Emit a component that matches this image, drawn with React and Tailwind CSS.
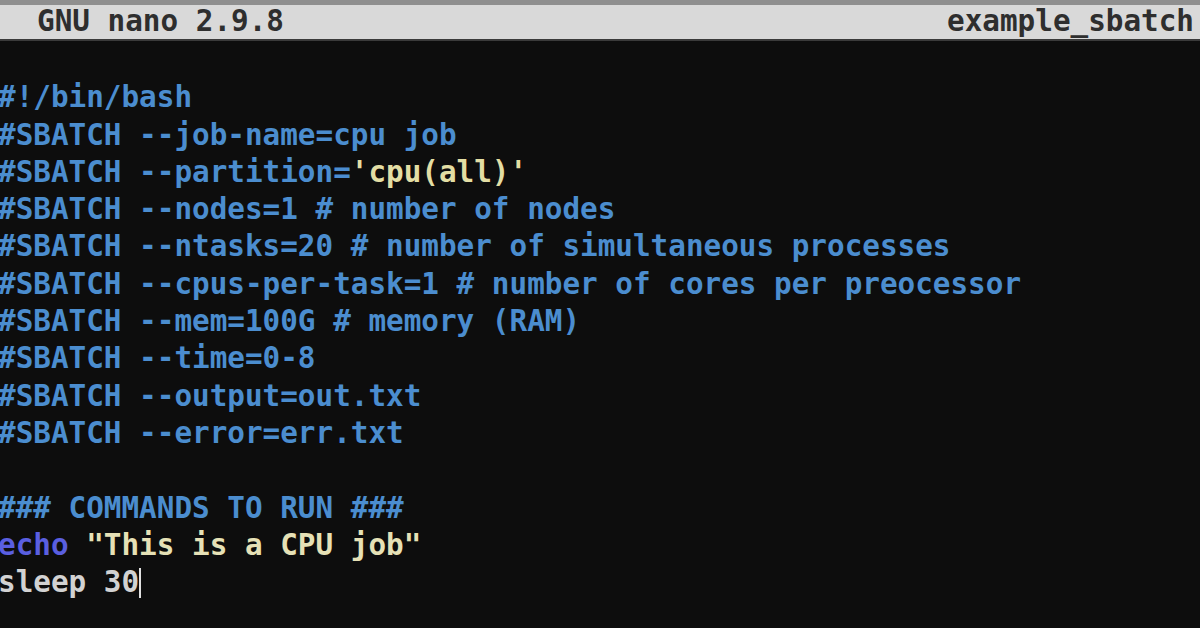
import React from 'react';

// ============================================
// NANO EDITOR SCREEN
// ============================================

const BLUE = 'text-[#4b8dcf]';

const lines = [
  [{ t: '', c: BLUE }],
  [{ t: '#!/bin/bash', c: BLUE }],
  [{ t: '#SBATCH --job-name=cpu job', c: BLUE }],
  [
    { t: "#SBATCH --partition=", c: BLUE },
    { t: "'cpu(all)'", c: 'text-[#e3dea4]' },
  ],
  [{ t: '#SBATCH --nodes=1 # number of nodes', c: BLUE }],
  [{ t: '#SBATCH --ntasks=20 # number of simultaneous processes', c: BLUE }],
  [{ t: '#SBATCH --cpus-per-task=1 # number of cores per preocessor', c: BLUE }],
  [{ t: '#SBATCH --mem=100G # memory (RAM)', c: BLUE }],
  [{ t: '#SBATCH --time=0-8', c: BLUE }],
  [{ t: '#SBATCH --output=out.txt', c: BLUE }],
  [{ t: '#SBATCH --error=err.txt', c: BLUE }],
  [{ t: '', c: BLUE }],
  [{ t: '### COMMANDS TO RUN ###', c: BLUE }],
  [
    { t: 'echo', c: 'text-[#5a5fe0]' },
    { t: ' "This is a CPU job"', c: 'text-[#e6e1b6]' },
  ],
  [{ t: 'sleep 30', c: 'text-[#d2d2d2]' }],
];

const App = () => {
  return (
    <div
      className="w-[1200px] h-[628px] overflow-hidden bg-[#0d0d0d] flex flex-col"
      style={{ fontFamily: '"DejaVu Sans Mono", "Liberation Mono", monospace' }}
    >
      {/* Title Bar */}
      <div className="h-[5px] bg-[#8f8f8f]" />
      <div className="h-[36px] bg-[#d9d9d9] flex items-center justify-between pl-[37px] pr-[6px] text-[29.3px] font-semibold text-[#2e2e2e] border-b-2 border-[#3a3a3a]">
        <span>GNU nano 2.9.8</span>
        <span>example_sbatch</span>
      </div>

      {/* Buffer */}
      <div className="flex flex-col -ml-[2px] text-[29.3px] font-semibold leading-[37.3px] pt-[1px]">
        {lines.map((parts, i) => (
          <div key={i} className="whitespace-pre h-[37.3px] flex items-center">
            {parts.map((p, j) => (
              <span key={j} className={p.c}>{p.t}</span>
            ))}
            {i === lines.length - 1 && (
              <span className="inline-block w-[2px] h-[30px] bg-[#e0e0e0]" />
            )}
          </div>
        ))}
      </div>
    </div>
  );
};

export default App;
